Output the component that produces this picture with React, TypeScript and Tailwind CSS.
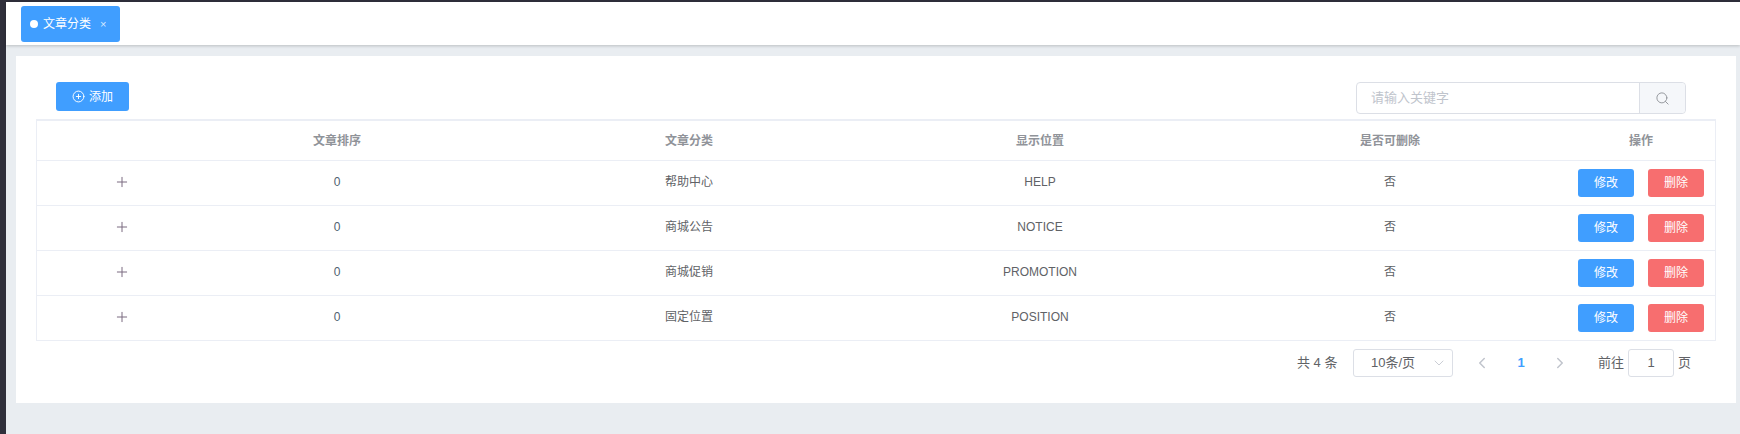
import { ChevronDown, ChevronLeft, ChevronRight, CirclePlus, Plus, Search } from 'lucide-react'

const rows = [
  { sort: 0, name: '帮助中心', position: 'HELP' },
  { sort: 0, name: '商城公告', position: 'NOTICE' },
  { sort: 0, name: '商城促销', position: 'PROMOTION' },
  { sort: 0, name: '固定位置', position: 'POSITION' },
]

const gridCols = 'grid grid-cols-[126px_348px_356px_346px_354px_148px] items-center'

function ActionButton({ label, danger }: { label: string; danger?: boolean }) {
  return (
    <button
      className={
        danger
          ? 'w-[56px] h-[28px] mt-[2px] rounded-[3px] bg-[#f76e6f] text-white text-xs'
          : 'w-[56px] h-[28px] mt-[2px] rounded-[3px] bg-[#409eff] text-white text-xs'
      }
    >
      {label}
    </button>
  )
}

export default function App() {
  return (
    <div className="w-[1740px] h-[434px] overflow-hidden flex bg-[#2f2f3b] font-['Liberation_Sans','Noto_Sans_CJK_SC',sans-serif]">
      <div className="w-[6px] shrink-0" />
      <div className="flex-1 mt-[2px] bg-[#e9edf1]">
        <div className="h-[43px] bg-white shadow-[0_1px_3px_rgba(0,0,0,0.2)] pl-[15px] pt-[4px]">
          <div className="w-[99px] h-[36px] rounded-[3px] bg-[#409eff] text-white flex items-center pl-[9px]">
            <span className="w-[8px] h-[8px] rounded-full bg-white" />
            <span className="ml-[5px] text-xs">文章分类</span>
            <span className="ml-[9px] text-[11px] leading-none text-[#d5e8ff]">×</span>
          </div>
        </div>

        <div className="mt-[11px] ml-[10px] mr-[4px] h-[347px] bg-white pt-[26px] px-[20px]">
          <div className="flex justify-between items-start pl-[20px] pr-[30px] mb-[5px]">
            <button className="w-[73px] h-[29px] rounded-[3px] bg-[#409eff] text-white text-xs flex items-center justify-center gap-[4px]">
              <CirclePlus size={13} strokeWidth={1.75} />
              添加
            </button>
            <div className="w-[330px] h-[32px] flex rounded-[4px] border border-[#dcdfe6] text-[13px]">
              <div className="flex-1 pl-[14px] flex items-center text-[#c0c4cc]">请输入关键字</div>
              <div className="w-[46px] flex items-center justify-center bg-[#f5f7fa] border-l border-[#dcdfe6] rounded-r-[4px] text-[#909399]">
                <Search size={15} strokeWidth={1.5} />
              </div>
            </div>
          </div>

          <div className="border border-t-2 border-[#ebeef5] text-xs">
            <div className={`${gridCols} h-[39px] text-[#909399] font-bold text-center`}>
              <div />
              <div>文章排序</div>
              <div>文章分类</div>
              <div>显示位置</div>
              <div>是否可删除</div>
              <div>操作</div>
            </div>
            {rows.map((row) => (
              <div
                key={row.name}
                className={`${gridCols} h-[45px] pb-[2px] border-t border-[#ebeef5] text-[#606266] text-center`}
              >
                <div className="pl-[77px]">
                  <Plus size={16} strokeWidth={1.5} className="text-[#7b6a80]" />
                </div>
                <div className="text-[#4f5f70]">{row.sort}</div>
                <div>{row.name}</div>
                <div>{row.position}</div>
                <div>否</div>
                <div className="flex justify-center gap-[14px]">
                  <ActionButton label="修改" />
                  <ActionButton label="删除" danger />
                </div>
              </div>
            ))}
          </div>

          <div className="flex items-center mt-[8px] pl-[1261px] h-[28px] text-[13px] text-[#606266]">
            <span className="w-[56px]">共 4 条</span>
            <div className="w-[100px] h-[28px] rounded-[3px] border border-[#dcdfe6] flex items-center justify-between pl-[17px] pr-[5px]">
              <span>10条/页</span>
              <ChevronDown size={16} strokeWidth={1.25} className="text-[#c0c4cc]" />
            </div>
            <div className="w-[36px] ml-[11px] flex justify-center">
              <ChevronLeft size={18} strokeWidth={2} className="text-[#c0c4cc]" />
            </div>
            <span className="w-[42px] text-center text-[#409eff] font-bold">1</span>
            <div className="w-[36px] flex justify-center">
              <ChevronRight size={18} strokeWidth={2} className="text-[#c0c4cc]" />
            </div>
            <span className="ml-[20px]">前往</span>
            <div className="ml-[4px] w-[46px] h-[28px] rounded-[3px] border border-[#dcdfe6] flex items-center justify-center">
              1
            </div>
            <span className="ml-[4px]">页</span>
          </div>
        </div>
      </div>
    </div>
  )
}
